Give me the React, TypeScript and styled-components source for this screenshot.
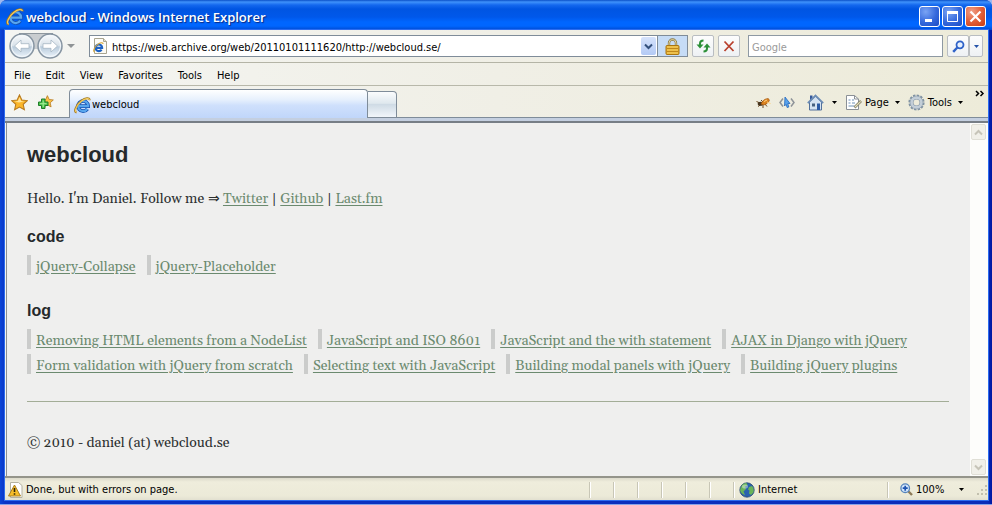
import React from "react";
import styled, { createGlobalStyle } from "styled-components";

const ui = `"DejaVu Sans Condensed", "Noto Sans", sans-serif`;

const GlobalStyle = createGlobalStyle`
  *, *::before, *::after { box-sizing: border-box; }
  html, body, #root { height: 100%; margin: 0; }
  body { background: #9db8f0; overflow: hidden; }
  button, input { font: inherit; color: inherit; margin: 0; padding: 0; }
  svg { display: block; flex: none; }
`;

const Window = styled.div`
  height: 100vh;
  display: flex;
  flex-direction: column;
  border-radius: 7px 7px 0 0;
  overflow: hidden;
  border-bottom: 1px solid #86a4e8;
  background: linear-gradient(to right, #0a45d8, #0a34c4 5px, #0a2cb8 calc(100% - 4px), #0016a0);
  font: 11px/14px ${ui};
  color: #000;
`;

const TitleBar = styled.header`
  flex: none;
  height: 30px;
  display: flex;
  align-items: center;
  gap: 2px;
  padding: 3px 6px 0 6px;
  background: linear-gradient(#0a50c8 0, #3f92fb 2px, #1468ee 5px, #0055e2 9px, #0058ea 17px, #0066ff 22px, #0066ff 26px, #0048d0 30px);
`;

const Title = styled.h1`
  flex: 1;
  margin: 0;
  font: 600 13px/18px "Open Sans", "Noto Sans", sans-serif;
  color: #fff;
  text-shadow: 1px 1px 1px #0a2a80;
`;

const Caption = styled.button<{ $close?: boolean }>`
  width: 21px;
  height: 21px;
  display: grid;
  place-items: center;
  border: 1px solid #fff;
  border-radius: 3px;
  background: ${(p) =>
    p.$close
      ? "radial-gradient(circle at 30% 25%, #f0a088, #e2603a 50%, #c83c12)"
      : "radial-gradient(circle at 30% 25%, #7aa4f4, #3468dc 55%, #1c4cc4)"};
`;

const Frame = styled.div`
  flex: 1;
  min-height: 0;
  display: flex;
  flex-direction: column;
  margin: 0 4px 4px 5px;
  background: linear-gradient(to right, #f4f5f2, #f0efe6 50%, #edebd9);
  box-shadow: 0 0 0 1px #2c6cf0;
`;

const NavBar = styled.div`
  flex: none;
  height: 33px;
  display: flex;
  align-items: center;
  padding: 0 5px 0 4px;
  border-bottom: 1px solid #b4b4a6;
`;

const Travel = styled.div`
  position: relative;
  display: flex;
  gap: 2px;
  margin-right: 4px;

  &::before {
    content: "";
    position: absolute;
    inset: 0 10px 10px;
    background: #c9cdd0;
    border-top: 1px solid #8e979e;
  }
`;

const RoundButton = styled.button`
  position: relative;
  width: 26px;
  height: 26px;
  border: 0;
  background: none;
`;

const BareButton = styled.button`
  display: flex;
  align-items: center;
  gap: 6px;
  border: 0;
  background: none;
  white-space: nowrap;
`;

const ToolMenu = styled(BareButton)`
  svg:first-child { margin-right: -3px; }
`;

const AddressBox = styled.div`
  flex: 1;
  display: flex;
  align-items: center;
  height: 22px;
  margin: 0 4px 0 14px;
  border: 1px solid #7f8c99;
  background: #fff;
  padding-left: 3px;
`;

const AddressInput = styled.input`
  flex: 1;
  min-width: 0;
  height: 18px;
  margin: 0 2px 0 4px;
  padding-top: 2px;
  border: 0;
  outline: 0;
  background: none;
`;

const DropButton = styled.button`
  width: 15px;
  height: 18px;
  display: grid;
  place-items: center;
  margin-right: 1px;
  border: 0;
  border-radius: 2px;
  background: linear-gradient(#d5e2fb, #b3caf5);
`;

const LockButton = styled.button`
  width: 30px;
  height: 20px;
  display: grid;
  place-items: center;
  border: 0;
  border-left: 1px solid #7f8c99;
  background: #c6dcf6;
`;

const ToolButton = styled.button<{ $width?: number }>`
  width: ${(p) => p.$width ?? 22}px;
  height: 22px;
  display: grid;
  place-items: center;
  border: 1px solid #b9bdc1;
  border-radius: 2px;
  background: linear-gradient(#fdfdfd, #eef1f4);
`;

const Pair = styled.div<{ $gap: number }>`
  display: flex;
  align-items: center;
  gap: ${(p) => p.$gap}px;
`;

const AddOns = styled(Pair)`
  margin-right: 4px;
`;

const SearchInput = styled.input`
  width: 195px;
  height: 22px;
  margin: 0 4px 0 8px;
  padding: 2px 3px 0;
  border: 1px solid #8e99a3;
  outline: 0;
  background: #fff;

  &::placeholder { color: #9a9a9a; opacity: 1; }
`;

const MenuBar = styled.nav`
  flex: none;
  height: 23px;
  display: flex;
  align-items: center;
  gap: 15px;
  padding: 3px 9px 0;
  border-bottom: 1px solid #b8b8aa;
`;

const TabBar = styled.div`
  flex: none;
  height: 32px;
  display: flex;
  align-items: flex-end;
  padding-left: 6px;
  box-shadow: inset 0 -1px 0 #7f8c99;
`;

const Favorites = styled.div`
  align-self: center;
  display: flex;
  gap: 9px;
  width: 58px;
`;

const Tab = styled.button`
  width: 299px;
  height: 29px;
  display: flex;
  align-items: center;
  gap: 1px;
  padding: 2px 0 0 4px;
  border: 1px solid #7f8c99;
  border-bottom: 0;
  border-radius: 4px 4px 0 0;
  background: linear-gradient(#fff, #e6f0fd 35%, #cfe0fc 55%, #c0d6fa);
`;

const NewTab = styled.button`
  width: 29px;
  height: 27px;
  border: 1px solid #7f8c99;
  border-left: 0;
  border-radius: 0 4px 0 0;
  background: linear-gradient(#fbfcfd, #dfe8ee 45%, #cfdbe5 50%, #f2f6fb);
`;

const Commands = styled.div`
  flex: 1;
  align-self: center;
  display: flex;
  justify-content: flex-end;
  align-items: center;
  padding: 1px 5px 0 0;
  gap: 8px;
`;

const Chevrons = styled(BareButton)`
  align-self: flex-start;
  margin-left: 4px;
`;

const TabStrip = styled.div`
  flex: none;
  height: 5px;
  background: #c4cfe0;
  border-bottom: 2px solid #777e86;
`;

const Viewport = styled.div`
  flex: 1;
  min-height: 0;
  display: flex;
  margin-left: 1px;
  border-left: 1px solid #8a8f94;
  background: #efefee;
`;

const Page = styled.main`
  flex: 1;
  min-width: 0;
  padding: 20px 21px 0 20px;
  font: 14px/20px Gelasio, Georgia, "DejaVu Serif Condensed", "Liberation Serif", serif;
  color: #2c3030;
`;

const SiteName = styled.h1`
  margin: 0 0 22px;
  font: bold 22px/24px "Liberation Sans", Arial, sans-serif;
  color: #25292b;
`;

const Intro = styled.p`
  margin: 0 0 18px;
`;

const Implies = styled.span`
  font-family: "Liberation Serif", serif;
`;

const Heading = styled.h2`
  margin: 0 0 8px;
  font: bold 16px/20px "Liberation Sans", Arial, sans-serif;
  color: #25292b;
`;

const Link = styled.a`
  color: #6b8a6f;
  text-decoration: underline;
  text-underline-offset: 2px;
`;

const List = styled.ul`
  display: flex;
  flex-wrap: wrap;
  gap: 5px 11px;
  margin: 0 0 26px;
  padding: 0;
  list-style: none;
`;

const Item = styled.li`
  height: 20px;
  padding-left: 5px;
  border-left: 4px solid #cbcccb;
  line-height: 24px;
  white-space: nowrap;
`;

const Rule = styled.hr`
  margin: 27px 0 31px;
  border: 0;
  border-top: 1px solid #a3ad97;
`;

const Copyright = styled.footer`
  line-height: 20px;
`;

const ScrollTrack = styled.div`
  flex: none;
  width: 18px;
  display: flex;
  flex-direction: column;
  justify-content: space-between;
  padding: 1px 2px 1px 1px;
  background: #fdfdfb;
`;

const ScrollButton = styled.button`
  width: 15px;
  height: 16px;
  display: grid;
  place-items: center;
  border: 1px solid #e0dfd6;
  border-radius: 2px;
  background: #f1f0e9;
`;

const StatusBar = styled.footer`
  flex: none;
  height: 24px;
  display: flex;
  align-items: center;
  padding-top: 1px;
  border-top: 2px solid #94948a;
  background: linear-gradient(#dcdacb, #efeddc 4px, #ecead8 18px, #e2e0d0);
`;

const Message = styled.div`
  flex: 1;
  display: flex;
  align-items: center;
  gap: 3px;
  padding-left: 3px;
`;

const Cell = styled.div<{ $width: number; $indent?: number }>`
  width: ${(p) => p.$width}px;
  height: 16px;
  display: flex;
  align-items: center;
  gap: 3px;
  padding-left: ${(p) => p.$indent ?? 0}px;
  border-left: 1px solid #c8c6b6;
  box-shadow: inset 1px 0 0 #fff;
`;

const Zoom = styled(BareButton)`
  flex: 1;
  gap: 3px;
  padding-right: 12px;

  span { flex: 1; text-align: left; }
`;

const IeLogo = ({ size = 16 }: { size?: number }) => (
  <svg width={size} height={size} viewBox="0 0 16 16" fill="none" aria-hidden="true">
    <path d="M12.6 11.2A4.8 4.8 0 1 1 13.4 8.6H4.8" stroke="#1450b0" strokeWidth="3.4" />
    <path d="M12.6 11.2A4.8 4.8 0 1 1 13.4 8.6H4.8" stroke="#58a6ee" strokeWidth="2" />
    <path d="M2.4 14.6C-.8 14 2 7.6 7 3.6C10.6.8 14.8.2 14.7 3" stroke="#a3781c" strokeWidth="1.9" />
    <path d="M2.4 14.4C-.2 13.6 2.4 7.6 7.2 3.8C10.6 1.2 14.2.6 14.5 2.8" stroke="#f2cc62" strokeWidth="1.1" />
  </svg>
);

const PageIcon = () => (
  <svg width="15" height="16" viewBox="0 0 15 16" aria-hidden="true">
    <path d="M1.5.5h9l3 3v12h-12z" fill="#fcfbf6" stroke="#a9a590" />
    <path d="M10.5.5v3h3" fill="#e4dfc8" stroke="#a9a590" />
    <g transform="translate(0 4) scale(.68)" fill="none">
      <path d="M12.6 11.2A4.8 4.8 0 1 1 13.4 8.6H4.8" stroke="#1d62c4" strokeWidth="3.2" />
      <path d="M2.4 14.6C-.8 14 2 7.6 7 3.6C10.6.8 14.8.2 14.7 3" stroke="#d8a838" strokeWidth="1.6" />
    </g>
  </svg>
);

const Arrow = ({ back }: { back?: boolean }) => (
  <svg width="26" height="26" viewBox="0 0 26 26" aria-hidden="true">
    <defs>
      <linearGradient id={back ? "orbBack" : "orbNext"} x1="0" y1="0" x2="0" y2="1">
        <stop offset="0" stopColor="#fafcfd" />
        <stop offset=".48" stopColor="#d9e2ea" />
        <stop offset=".54" stopColor="#b9cbdb" />
        <stop offset="1" stopColor="#eef6fd" />
      </linearGradient>
    </defs>
    <circle cx="13" cy="13" r="12" fill={`url(#${back ? "orbBack" : "orbNext"})`} stroke="#8795a2" strokeWidth="1.5" />
    <circle cx="13" cy="13" r="10.5" fill="none" stroke="#f4f8fb" />
    <path
      d={back ? "M5.5 13l6.5-6v3.7h8v4.6h-8V19z" : "M20.5 13L14 7v3.7H6v4.6h8V19z"}
      fill="#fff"
      stroke="#a5b5c3"
      strokeWidth=".8"
    />
  </svg>
);

const Caret = ({ color = "#000", size = 5 }: { color?: string; size?: number }) => (
  <svg width={size} height={size > 5 ? 4 : 3} viewBox="0 0 5 3" preserveAspectRatio="none" aria-hidden="true">
    <path d="M0 0h5L2.5 3z" fill={color} />
  </svg>
);

const Chevron = ({ up, color }: { up?: boolean; color: string }) => (
  <svg width="9" height="7" viewBox="0 0 9 7" fill="none" stroke={color} strokeWidth="2" aria-hidden="true">
    <path d={up ? "M1 5.5l3.5-3.5L8 5.5" : "M1 1.5L4.5 5 8 1.5"} />
  </svg>
);

const Lock = () => (
  <svg width="15" height="17" viewBox="0 0 15 17" aria-hidden="true">
    <path d="M4 8V5a3.5 3.5 0 0 1 7 0v3" fill="none" stroke="#8b7a44" strokeWidth="2.4" />
    <path d="M4 8V5a3.5 3.5 0 0 1 7 0v3" fill="none" stroke="#e2d6a4" />
    <rect x="1" y="7.5" width="13" height="9" rx="1" fill="#e2a928" stroke="#a87512" />
    <path d="M2 9h11M2 12h11M2 15h11" stroke="#f8d870" />
    <path d="M2 10.5h11M2 13.5h11" stroke="#b67f16" strokeWidth=".8" />
  </svg>
);

const Refresh = () => (
  <svg width="15" height="14" viewBox="0 0 15 14" fill="none" aria-hidden="true">
    <path d="M7.5 1.5Q4 1.5 4 4.5V6" stroke="#2c9038" strokeWidth="2" />
    <path d="M.5 5.5h7L4 9.5z" fill="#2c9038" />
    <path d="M7.5 12.5q3.5 0 3.5-3V8" stroke="#2c9038" strokeWidth="2" />
    <path d="M7.5 8.5h7L11 4.5z" fill="#2c9038" />
  </svg>
);

const Stop = () => (
  <svg width="12" height="12" viewBox="0 0 12 12" fill="none" aria-hidden="true">
    <path d="M1.5 1.5l9 9.5M10.5 1.5l-9 9.5" stroke="#b8402e" strokeWidth="1.8" />
  </svg>
);

const Magnifier = () => (
  <svg width="13" height="13" viewBox="0 0 13 13" fill="none" aria-hidden="true">
    <circle cx="8" cy="4.8" r="3.5" fill="#e6f0ff" stroke="#2f62c8" strokeWidth="1.8" />
    <path d="M5.3 7.5L1.2 11.8" stroke="#2f62c8" strokeWidth="2.4" />
  </svg>
);

const starPath = "M8 .8l2.2 4.8 5.2.6-3.9 3.5 1.1 5.2L8 12.3l-4.6 2.6 1.1-5.2L.6 6.2l5.200-.6z";

const Star = () => (
  <svg width="17" height="17" viewBox="0 0 16 16" aria-hidden="true">
    <path d={starPath} fill="#fbb62a" stroke="#b77a1e" />
    <path d="M8 3l1.5 3.5 3 .5-5 1-4-1 3-.5z" fill="#ffe49a" />
  </svg>
);

const AddStar = () => (
  <svg width="17" height="17" viewBox="0 0 17 17" aria-hidden="true">
    <g transform="translate(4 1) scale(.8)">
      <path d={starPath} fill="#fbc348" stroke="#b77a1e" />
    </g>
    <path d="M4.500 5h3.500v3h3v3.500h-3v3h-3.500v-3h-3v-3.500h3z" fill="#4cc44a" stroke="#1f7d2a" />
    <path d="M6.200 6.500v6.500M3 9.700h6.500" stroke="#a6ec98" />
  </svg>
);

const Bug = () => (
  <svg width="15" height="12" viewBox="0 0 15 12" fill="none" aria-hidden="true">
    <path d="M.5 4.5L4 6M2 9.500L5 7.500M7 11V8M11 9.500L9 7M5 3l2 2" stroke="#6d4a20" />
    <ellipse cx="4.500" cy="6.800" rx="2.800" ry="2" fill="#46351f" />
    <path d="M5 7Q7 2 12 1.500Q15 3 11 6.500Q8 9 5 7z" fill="#dc8420" stroke="#a4560f" strokeWidth=".7" />
    <path d="M8 4.500l3-1.500M11 5l3.500 1.500" stroke="#ffd282" />
  </svg>
);

const CodePointer = () => (
  <svg width="16" height="13" viewBox="0 0 16 13" fill="none" aria-hidden="true">
    <path d="M4 2.500L1 6.500l3 4M12 2.500l3 4-3 4" stroke="#8f9499" strokeWidth="1.500" />
    <path d="M6 1l5 6.500H8.800l1 3.500-1.600.6-1.100-3.200L5.500 10z" fill="#58a2ec" stroke="#2468bc" strokeWidth=".8" />
  </svg>
);

const Home = () => (
  <svg width="17" height="17" viewBox="0 0 17 17" aria-hidden="true">
    <path d="M3 1.500h2.500v5H3z" fill="#34589c" />
    <path d="M2.500 8v8h12V8l-6-6z" fill="#d5e2f1" stroke="#52719c" />
    <path d="M.8 9.200L8.500 1.500l7.700 7.700" fill="none" stroke="#6d8db5" strokeWidth="1.800" />
    <path d="M10 9.500h3V16h-3z" fill="#2c5aa4" />
    <path d="M5 9.500h3v3H5z" fill="#47607f" />
  </svg>
);

const PageTool = () => (
  <svg width="17" height="17" viewBox="0 0 17 17" fill="none" aria-hidden="true">
    <path d="M1.500 1.500h8l4 3.500v10.500h-12z" fill="#fff" stroke="#8b9096" />
    <path d="M9.500 1.500V5h4" stroke="#8b9096" />
    <path d="M3.500 6h2M7 6h2M3.500 9h2M7 9h3M3.500 12h6" stroke="#9fb6cf" strokeWidth="1.400" />
    <path d="M9.500 13.500L16 7" stroke="#7f7c66" strokeWidth="2.600" />
    <path d="M10 13L15.700 7.300" stroke="#e6e0b8" strokeWidth="1.200" />
  </svg>
);

const Gear = () => (
  <svg width="17" height="17" viewBox="0 0 17 17" fill="none" aria-hidden="true">
    <circle cx="8.500" cy="8.500" r="7" stroke="#8193a3" strokeWidth="2.200" strokeDasharray="2.400 1.265" />
    <circle cx="8.500" cy="8.500" r="4.900" stroke="#8799a9" strokeWidth="3.800" />
    <circle cx="8.500" cy="8.500" r="4.900" stroke="#c3ced8" strokeWidth="2.600" />
  </svg>
);

const Warning = () => (
  <svg width="15" height="16" viewBox="0 0 15 16" aria-hidden="true">
    <path d="M2.500.5h8l3.500 3v12H2.500z" fill="#fff" stroke="#b4b2a2" />
    <path d="M6.500 3L12.500 14H.5z" fill="#f7bd28" stroke="#a87f20" strokeLinejoin="round" />
    <path d="M6.500 6v4M6.500 11.300v1.500" stroke="#2d2408" strokeWidth="1.600" />
  </svg>
);

const Globe = () => (
  <svg width="16" height="16" viewBox="0 0 16 16" aria-hidden="true">
    <circle cx="8" cy="8" r="7.200" fill="#2a62ae" stroke="#2b4a70" strokeWidth=".8" />
    <path d="M3 3q3-2.600 5-1.600l.5 2-2.500 1L7 7 4.500 9.500 6 13q-4-1-5-5zM10 5l3-1q2.500 3 1.400 6.500L12 13l-2-1.500.5-3-1.500-1z" fill="#69b45a" />
    <ellipse cx="6" cy="4.500" rx="3" ry="2" fill="#fff" opacity=".4" />
  </svg>
);

const ZoomIcon = () => (
  <svg width="13" height="13" viewBox="0 0 13 13" fill="none" aria-hidden="true">
    <path d="M8 8l4 4" stroke="#8d7a58" strokeWidth="2.400" />
    <circle cx="5.200" cy="5.200" r="4.300" fill="#d3e6fb" stroke="#5584bc" strokeWidth="1.300" />
    <path d="M5.200 2.700v5M2.700 5.200h5" stroke="#1c53b0" strokeWidth="1.700" />
  </svg>
);

const Grip = () => (
  <svg width="12" height="12" viewBox="0 0 12 12" aria-hidden="true">
    <path d="M9 1h2v2H9zM5 5h2v2H5zM9 5h2v2H9zM1 9h2v2H1zM5 9h2v2H5zM9 9h2v2H9z" fill="#c2c0ae" />
  </svg>
);

const menus = ["File", "Edit", "View", "Favorites", "Tools", "Help"];
const code = ["jQuery-Collapse", "jQuery-Placeholder"];
const log = [
  "Removing HTML elements from a NodeList",
  "JavaScript and ISO 8601",
  "JavaScript and the with statement",
  "AJAX in Django with jQuery",
  "Form validation with jQuery from scratch",
  "Selecting text with JavaScript",
  "Building modal panels with jQuery",
  "Building jQuery plugins",
];

const LinkList = ({ items }: { items: string[] }) => (
  <List>
    {items.map((text) => (
      <Item key={text}>
        <Link href="#">{text}</Link>
      </Item>
    ))}
  </List>
);

export default function App() {
  return (
    <>
      <GlobalStyle />
      <Window>
        <TitleBar>
          <IeLogo size={18} />
          <Title>webcloud - Windows Internet Explorer</Title>
          <Pair $gap={2}>
            <Caption aria-label="Minimize">
              <svg width="13" height="13" viewBox="0 0 13 13"><path d="M2 9h7v3H2z" fill="#fff" /></svg>
            </Caption>
            <Caption aria-label="Maximize">
              <svg width="13" height="13" viewBox="0 0 13 13" fill="none" stroke="#fff">
                <path d="M1.5 2.5h10v9h-10z" /><path d="M1 2.5h11" strokeWidth="3" />
              </svg>
            </Caption>
            <Caption $close aria-label="Close window">
              <svg width="13" height="13" viewBox="0 0 13 13" fill="none" stroke="#fff" strokeWidth="2.2">
                <path d="M1.5 1.5l10 10M11.5 1.5l-10 10" />
              </svg>
            </Caption>
          </Pair>
        </TitleBar>

        <Frame>
          <NavBar>
            <Travel>
              <RoundButton aria-label="Back"><Arrow back /></RoundButton>
              <RoundButton aria-label="Forward"><Arrow /></RoundButton>
            </Travel>
            <BareButton aria-label="Recent pages"><Caret color="#8f9496" size={8} /></BareButton>
            <AddressBox>
              <PageIcon />
              <AddressInput aria-label="Address" defaultValue="https://web.archive.org/web/20110101111620/http://webcloud.se/" />
              <DropButton aria-label="Show addresses"><Chevron color="#33507c" /></DropButton>
              <LockButton aria-label="Security report"><Lock /></LockButton>
            </AddressBox>
            <Pair $gap={4}>
              <ToolButton aria-label="Refresh"><Refresh /></ToolButton>
              <ToolButton aria-label="Stop"><Stop /></ToolButton>
            </Pair>
            <SearchInput aria-label="Search" placeholder="Google" />
            <Pair $gap={0}>
              <ToolButton aria-label="Search web"><Magnifier /></ToolButton>
              <ToolButton $width={14} aria-label="Search options"><Caret color="#2452a8" /></ToolButton>
            </Pair>
          </NavBar>

          <MenuBar>
            {menus.map((m) => <BareButton key={m}>{m}</BareButton>)}
          </MenuBar>

          <TabBar>
            <Favorites>
              <BareButton aria-label="Favorites center"><Star /></BareButton>
              <BareButton aria-label="Add to favorites"><AddStar /></BareButton>
            </Favorites>
            <Tab><IeLogo size={17} />webcloud</Tab>
            <NewTab aria-label="New tab" />
            <Commands>
              <AddOns $gap={8}>
                <BareButton aria-label="Debug"><Bug /></BareButton>
                <BareButton aria-label="Developer tools"><CodePointer /></BareButton>
              </AddOns>
              <BareButton aria-label="Home"><Home /></BareButton>
              <BareButton aria-label="Home options"><Caret /></BareButton>
              <ToolMenu><PageTool />Page<Caret /></ToolMenu>
              <ToolMenu><Gear />Tools<Caret /></ToolMenu>
            </Commands>
            <Chevrons aria-label="More commands">
              <svg width="16" height="18" viewBox="0 0 16 18" fill="none" stroke="#000" strokeWidth="1.5">
                <path d="M4 5l2.500 2.500L4 10M8.500 5L11 7.500 8.500 10" />
              </svg>
            </Chevrons>
          </TabBar>
          <TabStrip />

          <Viewport>
            <Page>
              <SiteName>webcloud</SiteName>
              <Intro>
                Hello. I'm Daniel. Follow me <Implies>⇒</Implies> <Link href="#">Twitter</Link> |{" "}
                <Link href="#">Github</Link> | <Link href="#">Last.fm</Link>
              </Intro>
              <Heading>code</Heading>
              <LinkList items={code} />
              <Heading>log</Heading>
              <LinkList items={log} />
              <Rule />
              <Copyright>© 2010 - daniel (at) webcloud.se</Copyright>
            </Page>
            <ScrollTrack>
              <ScrollButton aria-label="Scroll up"><Chevron up color="#c6c4b8" /></ScrollButton>
              <ScrollButton aria-label="Scroll down"><Chevron color="#c6c4b8" /></ScrollButton>
            </ScrollTrack>
          </Viewport>

          <StatusBar>
            <Message><Warning />Done, but with errors on page.</Message>
            <Cell $width={24} />
            <Cell $width={24} />
            <Cell $width={24} />
            <Cell $width={24} />
            <Cell $width={24} />
            <Cell $width={24} />
            <Cell $width={154} $indent={5}><Globe />Internet</Cell>
            <Cell $width={89} $indent={12}>
              <Zoom><ZoomIcon /><span>100%</span><Caret /></Zoom>
            </Cell>
            <Grip />
          </StatusBar>
        </Frame>
      </Window>
    </>
  );
}
